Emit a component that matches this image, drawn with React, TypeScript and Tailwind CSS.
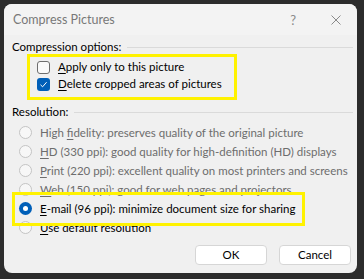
import React from "react";

const font = { fontFamily: 'Lato, "Liberation Sans", sans-serif' };

function Checkbox({ checked }: { checked: boolean }) {
  return checked ? (
    <span className="w-[13px] h-[13px] rounded-[3px] bg-[#005fb8] flex items-center justify-center shrink-0">
      <svg width="9" height="9" viewBox="0 0 9 9">
        <path d="M1.5 4.8 L3.6 6.8 L7.6 2.2" fill="none" stroke="#fff" strokeWidth="1" />
      </svg>
    </span>
  ) : (
    <span className="w-[13px] h-[13px] rounded-[3px] border border-[#6e6e6e] bg-[#fafafa] shrink-0" />
  );
}

function Radio({ checked }: { checked?: boolean }) {
  return checked ? (
    <span className="w-[13px] h-[13px] rounded-full bg-[#005fb8] flex items-center justify-center shrink-0">
      <span className="w-[5px] h-[5px] rounded-full bg-white" />
    </span>
  ) : (
    <span className="w-[13px] h-[13px] rounded-full border border-[#c4c4c4] bg-[#f7f7f7] shrink-0" />
  );
}

function Group({ label }: { label: string }) {
  return (
    <div className="flex items-center gap-[6px] h-[14px]">
      <span className="text-black">{label}</span>
      <span className="flex-1 h-px bg-[#dadada]" />
    </div>
  );
}

function Key({ ch }: { ch: string }) {
  return <span className="underline underline-offset-2">{ch}</span>;
}

export default function App() {
  return (
    <div className="w-[364px] h-[279px] bg-[#2c2c2c] pt-[4px] pl-[4px]" style={font}>
      <div className="w-[353px] h-[269px] rounded-[8px] bg-[#f0f0f0] overflow-hidden flex flex-col text-[11.5px] leading-[14px] whitespace-nowrap">
        <div className="h-[31px] bg-[#f3f3f3] flex items-center pl-[9px] pr-[16px] text-[#787878] text-[12.5px]">
          <span className="flex-1">Compress Pictures</span>
          <span className="mr-[35px] text-[13px] text-[#8a8a8a]">?</span>
          <svg width="10" height="10" viewBox="0 0 10 10">
            <path d="M0.5 0.5 L9.5 9.5 M9.5 0.5 L0.5 9.5" stroke="#8a8a8a" strokeWidth="1" />
          </svg>
        </div>
        <div className="flex flex-col pl-[8px] pr-[4px] pt-[5px]">
          <Group label="Compression options:" />
          <div className="ml-[15px] w-[210px] border-[3px] border-[#fff200] pl-[7px] pt-[3px] pb-[6px] flex flex-col gap-[3px]">
            <div className="flex items-center gap-[8px] h-[14px]">
              <Checkbox checked={false} />
              <span className="text-black">
                <Key ch="A" />pply only to this picture
              </span>
            </div>
            <div className="flex items-center gap-[8px] h-[14px]">
              <Checkbox checked />
              <span className="text-black">
                <Key ch="D" />elete cropped areas of pictures
              </span>
            </div>
          </div>
          <div className="mt-[5px]">
            <Group label="Resolution:" />
          </div>
          <div className="flex flex-col ml-[7px] mt-[4px] text-[#6d6d6d]">
            <div className="flex items-center gap-[8px] h-[19px]">
              <Radio />
              <span>High <Key ch="f" />idelity: preserves quality of the original picture</span>
            </div>
            <div className="flex items-center gap-[8px] h-[19px]">
              <Radio />
              <span><Key ch="H" />D (330 ppi): good quality for high-definition (HD) displays</span>
            </div>
            <div className="flex items-center gap-[8px] h-[19px]">
              <Radio />
              <span><Key ch="P" />rint (220 ppi): excellent quality on most printers and screens</span>
            </div>
            <div className="flex items-center gap-[8px] h-[19px]">
              <Radio />
              <span><Key ch="W" />eb (150 ppi): good for web pages and projectors</span>
            </div>
          </div>
          <div className="relative h-[19px] flex items-center gap-[8px] pl-[7px] text-black">
            <span className="absolute left-[0px] top-[-7px] w-[293px] h-[34px] border-[3px] border-[#fff200]" />
            <Radio checked />
            <span><Key ch="E" />-mail (96 ppi): minimize document size for sharing</span>
          </div>
          <div className="flex items-center gap-[8px] h-[19px] pl-[7px] text-black">
            <Radio />
            <span><Key ch="U" />se default resolution</span>
          </div>
          <div className="flex justify-end gap-[12px] mt-[8px] pr-[2px]">
            <button className="w-[72px] h-[20px] rounded-[4px] bg-white border border-[#d6d6d6] text-black text-[11.5px]">OK</button>
            <button className="w-[72px] h-[20px] rounded-[4px] bg-white border border-[#d6d6d6] text-black text-[11.5px]">Cancel</button>
          </div>
        </div>
      </div>
    </div>
  );
}
